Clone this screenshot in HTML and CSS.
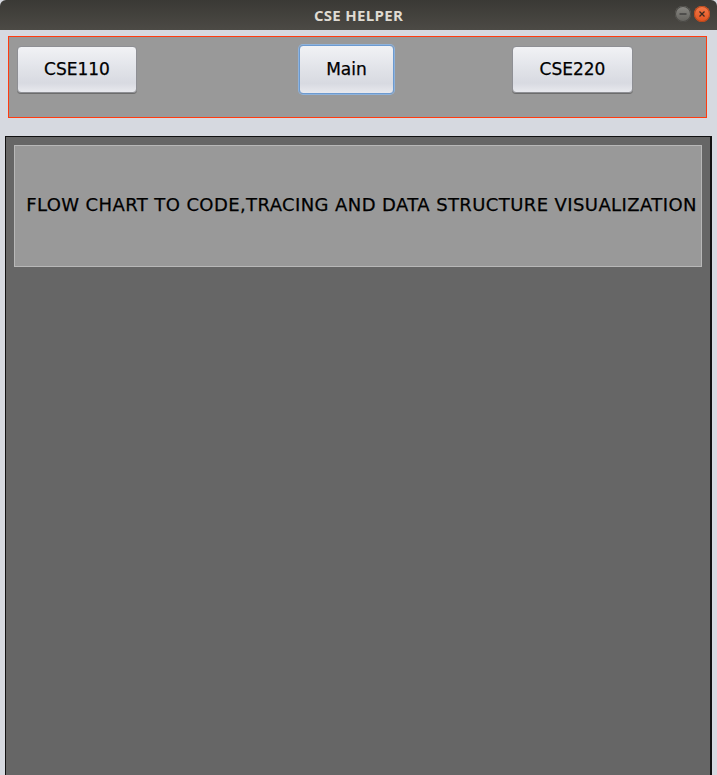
FILE: index.html
```html
<!DOCTYPE html>
<html>
<head>
<meta charset="utf-8">
<link rel="stylesheet" href="styles.css">
</head>
<body>
<div class="window">
  <div class="titlebar">
    <span class="title">CSE HELPER</span>
    <div class="controls">
      <span class="ctl min"><svg width="16" height="16" viewBox="0 0 16 16"><line x1="4.5" y1="8" x2="11.5" y2="8" stroke="#3a3a38" stroke-width="1.3"/></svg></span>
      <span class="ctl close"><svg width="16" height="16" viewBox="0 0 16 16"><path d="M5.5 5.5 L10.5 10.5 M10.5 5.5 L5.5 10.5" stroke="#3a2a20" stroke-width="1.3"/></svg></span>
    </div>
  </div>
  <div class="content">
    <div class="nav">
      <button class="btn b1">CSE110</button>
      <button class="btn b2 focused">Main</button>
      <button class="btn b3">CSE220</button>
    </div>
    <div class="main">
      <div class="banner">FLOW CHART TO CODE,TRACING AND DATA STRUCTURE VISUALIZATION</div>
    </div>
  </div>
</div>
</body>
</html>
```
FILE: styles.css
```css
html, body {
  margin: 0;
  padding: 0;
  width: 717px;
  height: 775px;
  overflow: hidden;
  background: #d6d9e0;
}
.window {
  width: 717px;
  height: 775px;
  display: flex;
  flex-direction: column;
}
.titlebar {
  height: 30px;
  flex: none;
  background: linear-gradient(#3a3935, #4c4a45);
  border-radius: 6px 6px 0 0;
  display: flex;
  align-items: center;
  justify-content: center;
  position: relative;
}
.title {
  font-family: "Open Sans", "DejaVu Sans", sans-serif;
  font-weight: 700;
  font-size: 15px;
  color: #dfdbd2;
  letter-spacing: 0.3px;
  margin-top: -1px;
}
.controls {
  position: absolute;
  right: 7px;
  top: 6px;
  display: flex;
  gap: 3px;
}
.ctl {
  width: 16px;
  height: 16px;
  border-radius: 50%;
  display: block;
}
.ctl svg { display: block; }
.min {
  background: linear-gradient(#8a8984, #62615c);
  box-shadow: inset 0 0 0 1px #4a4945;
}
.close {
  background: linear-gradient(#f47a4a, #e0511e);
  box-shadow: inset 0 0 0 1px #b8481c;
}
.content {
  flex: 1;
  display: flex;
  flex-direction: column;
  padding: 6px 5px 0 5px;
}
.nav {
  margin: 0 5px 0 3px;
  height: 82px;
  border: 1px solid #ff3b10;
  background: #999999;
  display: flex;
  align-items: flex-start;
  padding: 9px 0 0 8px;
  box-sizing: border-box;
}
.btn {
  height: 47px;
  font-family: "DejaVu Sans", sans-serif;
  font-size: 17px;
  color: #000;
  -webkit-text-stroke: 0.25px #000;
  background: linear-gradient(#f1f2f5, #dfe1e7 55%, #d8dae1 80%, #e8e9ee);
  border: 1px solid #8e8f94;
  border-radius: 4px;
  box-shadow: 0 1px 0 #6c6c6c;
  padding: 0 0 2px 0;
  margin: 0;
  flex: none;
}
.b1 { width: 120px; }
.b2 { width: 95px; height: 49px; margin-top: -1px; margin-left: 162px; }
.b3 { width: 121px; margin-left: 118px; }
.focused {
  border: 1px solid #6c9ad0;
  box-shadow: 0 0 0 1px #8fb2da;
}
.main {
  margin-top: 18px;
  flex: 1;
  background: #666666;
  border-left: 1px solid #111;
  border-top: 1px solid #111;
  border-right: 2px solid #111;
  padding: 8px 8px 0 8px;
}
.banner {
  box-sizing: content-box;
  height: 70px;
  padding-top: 50px;
  padding-left: 7px;
  background: #999999;
  border: 1px solid #b8b8b8;
  display: flex;
  align-items: flex-start;
  justify-content: center;
  font-family: "DejaVu Sans", sans-serif;
  font-size: 18px;
  letter-spacing: 0.4px;
  color: #000;
  -webkit-text-stroke: 0.25px #000;
  white-space: nowrap;
  line-height: 1;
}
```
